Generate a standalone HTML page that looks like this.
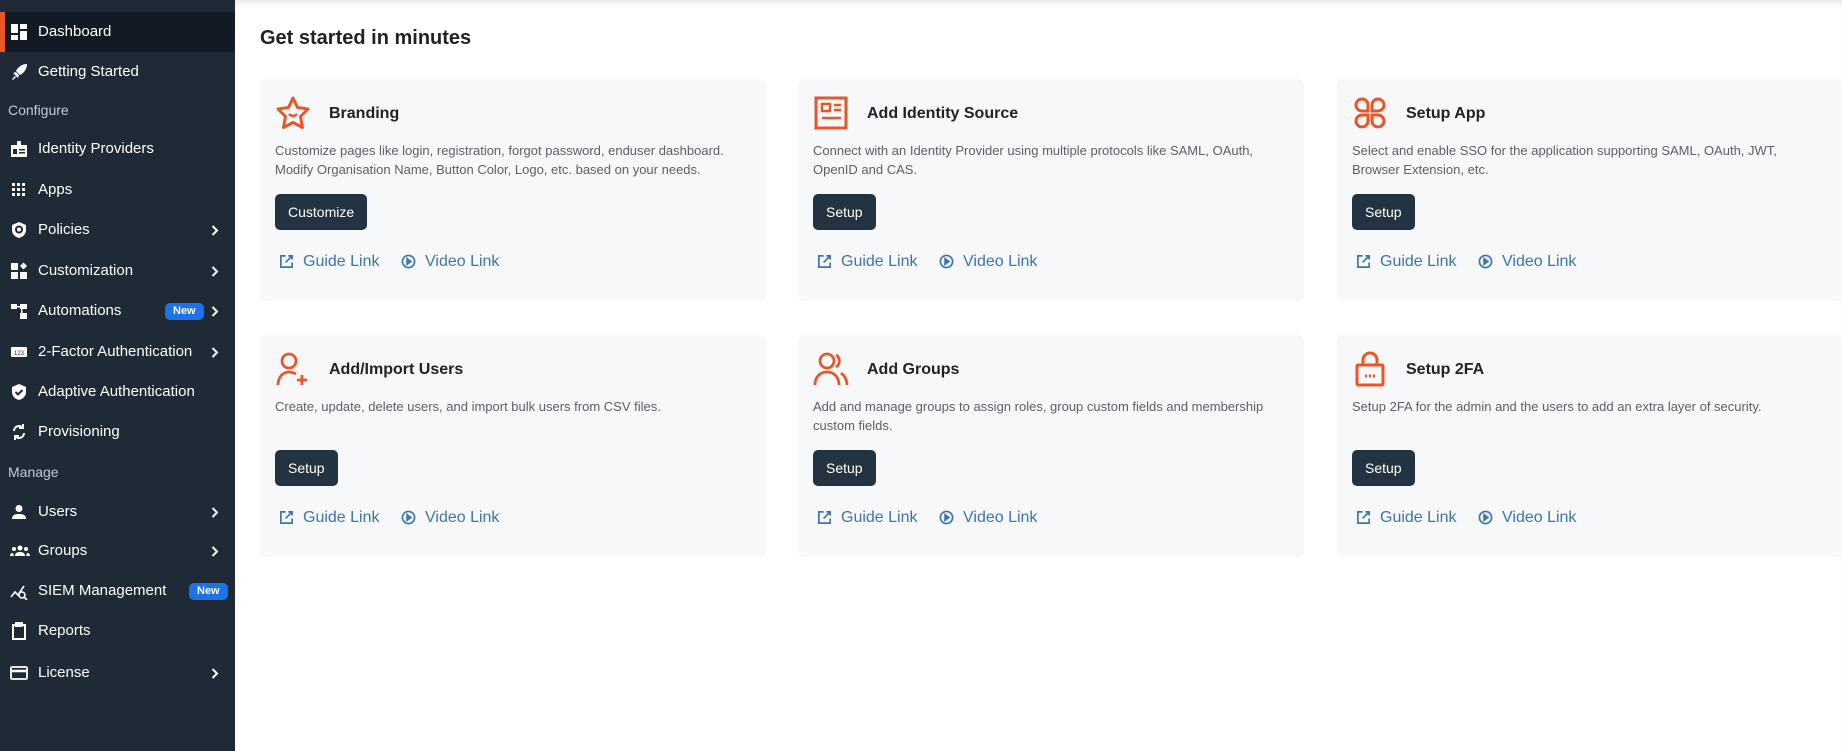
<!DOCTYPE html><html><head><style>
*{margin:0;padding:0;box-sizing:border-box}
body{width:1842px;height:751px;overflow:hidden;background:#fff;font-family:"Liberation Sans",sans-serif;position:relative}
.sb{position:absolute;left:0;top:0;width:235px;height:751px;background:#1f2a36}
.it{position:absolute;left:0;width:235px;height:40px;color:#fff;font-size:15px;line-height:40px}
.it .t{position:absolute;left:38px}
.it svg{position:absolute;left:10px;top:11px}
.it svg.ch{left:211px;top:15px}
.sec{position:absolute;left:8px;color:#c4cbd3;font-size:14px}
.act{background:#121a23}
.act:before{content:"";position:absolute;left:0;top:0;width:5px;height:40px;background:#e8562a}
.new{position:absolute;height:17px;line-height:17px;top:12px;padding:0 8px;background:#1a73e8;color:#fff;font-size:11px;font-weight:bold;border-radius:5px}
.main{position:absolute;left:235px;top:0;right:0;height:751px;box-shadow:inset 0 8px 8px -6px rgba(0,0,0,.12)}
h1{position:absolute;left:260px;top:27px;font-size:20px;color:#222;font-weight:bold}
.card{position:absolute;width:506px;height:222px;background:#f6f8fa;border-radius:6px}
.card .ic{position:absolute;left:15px;top:16px}
.card h2{position:absolute;left:69px;top:26px;font-size:16px;color:#222;font-weight:bold}
.card p{position:absolute;left:15px;top:62px;width:455px;font-size:13px;line-height:19px;color:#5b6167}
.card .b{position:absolute;left:15px;top:115px;height:36px;line-height:36px;padding:0 13px;background:#243342;color:#fff;font-size:14px;border-radius:5px}
.card .l{position:absolute;top:173px;font-size:16px;color:#3f75a8;line-height:20px}
.card .l svg{position:absolute;left:-24px;top:2px}
</style></head><body>
<div class="sb">
<div class="it act" style="top:12px"><svg width="18" height="18" viewBox="0 0 18 18" fill="#fff"><rect x="1" y="1" width="7" height="9"/><rect x="10" y="1" width="7" height="5"/><rect x="1" y="12" width="7" height="5"/><rect x="10" y="8" width="7" height="9"/></svg><span class="t">Dashboard</span></div>
<div class="it" style="top:52px"><svg width="18" height="18" viewBox="0 0 18 18" fill="#fff"><path d="M17 1C12 1 8 4 6 8L10 12C14 10 17 6 17 1Z M3 10l3-1 3 3-1 3z M2 16l3-3 1 1-3 3z"/></svg><span class="t">Getting Started</span></div>
<div class="sec" style="top:102px">Configure</div>
<div class="it" style="top:129px"><svg width="18" height="18" viewBox="0 0 18 18" fill="#fff"><path d="M7 1h4v4H7z M1 5h16v12H1z"/><rect x="3" y="9" width="4" height="5" fill="#1f2a36"/><rect x="9" y="9" width="6" height="1.5" fill="#1f2a36"/><rect x="9" y="12" width="6" height="1.5" fill="#1f2a36"/></svg><span class="t">Identity Providers</span></div>
<div class="it" style="top:170px"><svg width="18" height="18" viewBox="0 0 18 18" fill="#fff"><path d="M2 2h3v3H2zM7 2h3v3H7zM12 2h3v3h-3zM2 7h3v3H2zM7 7h3v3H7zM12 7h3v3h-3zM2 12h3v3H2zM7 12h3v3H7zM12 12h3v3h-3z"/></svg><span class="t">Apps</span></div>
<div class="it" style="top:210px"><svg width="18" height="18" viewBox="0 0 18 18"><path d="M9 1l7 3v5c0 4-3 7-7 8-4-1-7-4-7-8V4z" fill="#fff"/><circle cx="9" cy="8.5" r="3" fill="none" stroke="#1f2a36" stroke-width="2"/></svg><span class="t">Policies</span><svg class="ch" width="8" height="11" viewBox="0 0 8 11" fill="none" stroke="#fff" stroke-width="2"><path d="M1.5 1l4.5 4.5-4.5 4.5"/></svg></div>
<div class="it" style="top:251px"><svg width="18" height="18" viewBox="0 0 18 18" fill="#fff"><rect x="1" y="1" width="7" height="7"/><rect x="1" y="10" width="7" height="7"/><rect x="10" y="10" width="7" height="7"/><path d="M13.5 0.5l3.5 3.5-3.5 3.5-3.5-3.5z"/></svg><span class="t">Customization</span><svg class="ch" width="8" height="11" viewBox="0 0 8 11" fill="none" stroke="#fff" stroke-width="2"><path d="M1.5 1l4.5 4.5-4.5 4.5"/></svg></div>
<div class="it" style="top:291px"><svg width="18" height="18" viewBox="0 0 18 18" fill="#fff"><rect x="1" y="2" width="6" height="5"/><rect x="10" y="2" width="7" height="5"/><rect x="10" y="11" width="7" height="6"/><rect x="7" y="4" width="3" height="1.5"/><rect x="11" y="7" width="1.5" height="4"/></svg><span class="t">Automations</span><span class="new" style="left:165px">New</span><svg class="ch" width="8" height="11" viewBox="0 0 8 11" fill="none" stroke="#fff" stroke-width="2"><path d="M1.5 1l4.5 4.5-4.5 4.5"/></svg></div>
<div class="it" style="top:332px"><svg width="18" height="18" viewBox="0 0 18 18"><rect x="1" y="4" width="16" height="10" rx="1" fill="#fff"/><text x="9" y="12" font-size="6" text-anchor="middle" fill="#1f2a36" font-family="Liberation Sans">123</text></svg><span class="t">2-Factor Authentication</span><svg class="ch" width="8" height="11" viewBox="0 0 8 11" fill="none" stroke="#fff" stroke-width="2"><path d="M1.5 1l4.5 4.5-4.5 4.5"/></svg></div>
<div class="it" style="top:372px"><svg width="18" height="18" viewBox="0 0 18 18"><path d="M9 1l7 3v5c0 4-3 7-7 8-4-1-7-4-7-8V4z" fill="#fff"/><path d="M5.5 9l2.5 2.5 4.5-4.5" fill="none" stroke="#1f2a36" stroke-width="2"/></svg><span class="t">Adaptive Authentication</span></div>
<div class="it" style="top:412px"><svg width="18" height="18" viewBox="0 0 18 18" fill="none" stroke="#fff" stroke-width="2"><path d="M4 8a5 5 0 0 1 9-3M14 10a5 5 0 0 1-9 3"/><path d="M13 1v4H9M5 17v-4h4"/></svg><span class="t">Provisioning</span></div>
<div class="sec" style="top:464px">Manage</div>
<div class="it" style="top:492px"><svg width="18" height="18" viewBox="0 0 18 18" fill="#fff"><circle cx="9" cy="5.5" r="3.5"/><path d="M2 16c0-4 3-5 7-5s7 1 7 5z"/></svg><span class="t">Users</span><svg class="ch" width="8" height="11" viewBox="0 0 8 11" fill="none" stroke="#fff" stroke-width="2"><path d="M1.5 1l4.5 4.5-4.5 4.5"/></svg></div>
<div class="it" style="top:531px"><svg width="20" height="18" viewBox="0 0 20 18" fill="#fff"><circle cx="10" cy="6" r="2.5"/><circle cx="4" cy="7" r="2"/><circle cx="16" cy="7" r="2"/><path d="M5 14c0-3 2-4 5-4s5 1 5 4zM0 14c0-2 1-3 3-3l1 3zM20 14c0-2-1-3-3-3l-1 3z"/></svg><span class="t">Groups</span><svg class="ch" width="8" height="11" viewBox="0 0 8 11" fill="none" stroke="#fff" stroke-width="2"><path d="M1.5 1l4.5 4.5-4.5 4.5"/></svg></div>
<div class="it" style="top:571px"><svg width="20" height="18" viewBox="0 0 20 18" fill="none" stroke="#fff" stroke-width="1.6"><path d="M1 15l4-5 3 3 6-9"/><circle cx="12" cy="13" r="3"/><path d="M14 15l3 3"/></svg><span class="t">SIEM Management</span><span class="new" style="left:189px">New</span></div>
<div class="it" style="top:611px"><svg width="18" height="18" viewBox="0 0 18 18" fill="none" stroke="#fff" stroke-width="2"><rect x="3" y="3" width="12" height="14"/><rect x="6" y="1" width="6" height="3" fill="#fff"/></svg><span class="t">Reports</span></div>
<div class="it" style="top:653px"><svg width="18" height="18" viewBox="0 0 18 18" fill="none" stroke="#fff" stroke-width="1.8"><rect x="1" y="3" width="16" height="12" rx="1"/><path d="M1 7h16" stroke-width="2.5"/></svg><span class="t">License</span><svg class="ch" width="8" height="11" viewBox="0 0 8 11" fill="none" stroke="#fff" stroke-width="2"><path d="M1.5 1l4.5 4.5-4.5 4.5"/></svg></div>
</div>
<div class="main"></div>
<h1>Get started in minutes</h1>

<div class="card" style="left:260px;top:79px"><svg class="ic" width="36" height="36" viewBox="0 0 36 36" fill="none" stroke="#e8562a" stroke-width="3" stroke-linejoin="round"><path d="M18 3l4.5 9.5 10.5 1.5-7.5 7.5 2 11-9.5-5-9.5 5 2-11L3 14l10.5-1.5z"/><path d="M14 19q4 4 8 0" stroke-width="2.5"/></svg><h2>Branding</h2><p>Customize pages like login, registration, forgot password, enduser dashboard. Modify Organisation Name, Button Color, Logo, etc. based on your needs.</p><span class="b">Customize</span><span class="l" style="left:43px"><svg width="15" height="15" viewBox="0 0 16 16" fill="none" stroke="#3f75a8" stroke-width="1.8"><path d="M7 2H2v12h12V9M10 2h4v4M14 2L7 9"/></svg>Guide Link</span><span class="l" style="left:165px"><svg width="15" height="15" viewBox="0 0 16 16" fill="none" stroke="#3f75a8" stroke-width="1.8"><circle cx="8" cy="8" r="6.5"/><path d="M6.5 5v6l4-3z" fill="#3f75a8"/></svg>Video Link</span></div>

<div class="card" style="left:798px;top:79px"><svg class="ic" width="36" height="36" viewBox="0 0 36 36" fill="none" stroke="#e8562a" stroke-width="3"><rect x="3" y="3" width="30" height="30"/><rect x="9" y="9" width="8" height="7" stroke-width="2.5"/><path d="M21 10h7M21 15h7M9 23h19" stroke-width="2.5"/></svg><h2>Add Identity Source</h2><p>Connect with an Identity Provider using multiple protocols like SAML, OAuth, OpenID and CAS.</p><span class="b">Setup</span><span class="l" style="left:43px"><svg width="15" height="15" viewBox="0 0 16 16" fill="none" stroke="#3f75a8" stroke-width="1.8"><path d="M7 2H2v12h12V9M10 2h4v4M14 2L7 9"/></svg>Guide Link</span><span class="l" style="left:165px"><svg width="15" height="15" viewBox="0 0 16 16" fill="none" stroke="#3f75a8" stroke-width="1.8"><circle cx="8" cy="8" r="6.5"/><path d="M6.5 5v6l4-3z" fill="#3f75a8"/></svg>Video Link</span></div>

<div class="card" style="left:1337px;top:79px"><svg class="ic" width="36" height="36" viewBox="0 0 36 36" fill="none" stroke="#e8562a" stroke-width="3"><path d="M16 16H10a6 6 0 1 1 6-6zM20 16h6a6 6 0 1 0-6-6zM16 20H10a6 6 0 1 0 6 6zM20 20h6a6 6 0 1 1-6 6z"/></svg><h2>Setup App</h2><p>Select and enable SSO for the application supporting SAML, OAuth, JWT, Browser Extension, etc.</p><span class="b">Setup</span><span class="l" style="left:43px"><svg width="15" height="15" viewBox="0 0 16 16" fill="none" stroke="#3f75a8" stroke-width="1.8"><path d="M7 2H2v12h12V9M10 2h4v4M14 2L7 9"/></svg>Guide Link</span><span class="l" style="left:165px"><svg width="15" height="15" viewBox="0 0 16 16" fill="none" stroke="#3f75a8" stroke-width="1.8"><circle cx="8" cy="8" r="6.5"/><path d="M6.5 5v6l4-3z" fill="#3f75a8"/></svg>Video Link</span></div>

<div class="card" style="left:260px;top:335px"><svg class="ic" width="36" height="36" viewBox="0 0 36 36" fill="none" stroke="#e8562a" stroke-width="2.8"><circle cx="14" cy="10" r="7"/><path d="M3 34c0-8 5-13 11-13 3 0 5 1 7 2M27 24v10M22 29h10"/></svg><h2>Add/Import Users</h2><p>Create, update, delete users, and import bulk users from CSV files.</p><span class="b">Setup</span><span class="l" style="left:43px"><svg width="15" height="15" viewBox="0 0 16 16" fill="none" stroke="#3f75a8" stroke-width="1.8"><path d="M7 2H2v12h12V9M10 2h4v4M14 2L7 9"/></svg>Guide Link</span><span class="l" style="left:165px"><svg width="15" height="15" viewBox="0 0 16 16" fill="none" stroke="#3f75a8" stroke-width="1.8"><circle cx="8" cy="8" r="6.5"/><path d="M6.5 5v6l4-3z" fill="#3f75a8"/></svg>Video Link</span></div>

<div class="card" style="left:798px;top:335px"><svg class="ic" width="36" height="36" viewBox="0 0 36 36" fill="none" stroke="#e8562a" stroke-width="2.8"><circle cx="14" cy="10" r="7"/><path d="M2 34c0-8 5-13 12-13s12 5 12 13M23 4a7 7 0 0 1 0 12M28 22c4 3 6 7 6 12"/></svg><h2>Add Groups</h2><p>Add and manage groups to assign roles, group custom fields and membership custom fields.</p><span class="b">Setup</span><span class="l" style="left:43px"><svg width="15" height="15" viewBox="0 0 16 16" fill="none" stroke="#3f75a8" stroke-width="1.8"><path d="M7 2H2v12h12V9M10 2h4v4M14 2L7 9"/></svg>Guide Link</span><span class="l" style="left:165px"><svg width="15" height="15" viewBox="0 0 16 16" fill="none" stroke="#3f75a8" stroke-width="1.8"><circle cx="8" cy="8" r="6.5"/><path d="M6.5 5v6l4-3z" fill="#3f75a8"/></svg>Video Link</span></div>

<div class="card" style="left:1337px;top:335px"><svg class="ic" width="36" height="36" viewBox="0 0 36 36" fill="none" stroke="#e8562a" stroke-width="3"><rect x="5" y="14" width="26" height="20" rx="1"/><path d="M11 14V9a7 7 0 0 1 14 0v5"/><path d="M13 25h2M17 25h2M21 25h2"/></svg><h2>Setup 2FA</h2><p>Setup 2FA for the admin and the users to add an extra layer of security.</p><span class="b">Setup</span><span class="l" style="left:43px"><svg width="15" height="15" viewBox="0 0 16 16" fill="none" stroke="#3f75a8" stroke-width="1.8"><path d="M7 2H2v12h12V9M10 2h4v4M14 2L7 9"/></svg>Guide Link</span><span class="l" style="left:165px"><svg width="15" height="15" viewBox="0 0 16 16" fill="none" stroke="#3f75a8" stroke-width="1.8"><circle cx="8" cy="8" r="6.5"/><path d="M6.5 5v6l4-3z" fill="#3f75a8"/></svg>Video Link</span></div>
</body></html>
